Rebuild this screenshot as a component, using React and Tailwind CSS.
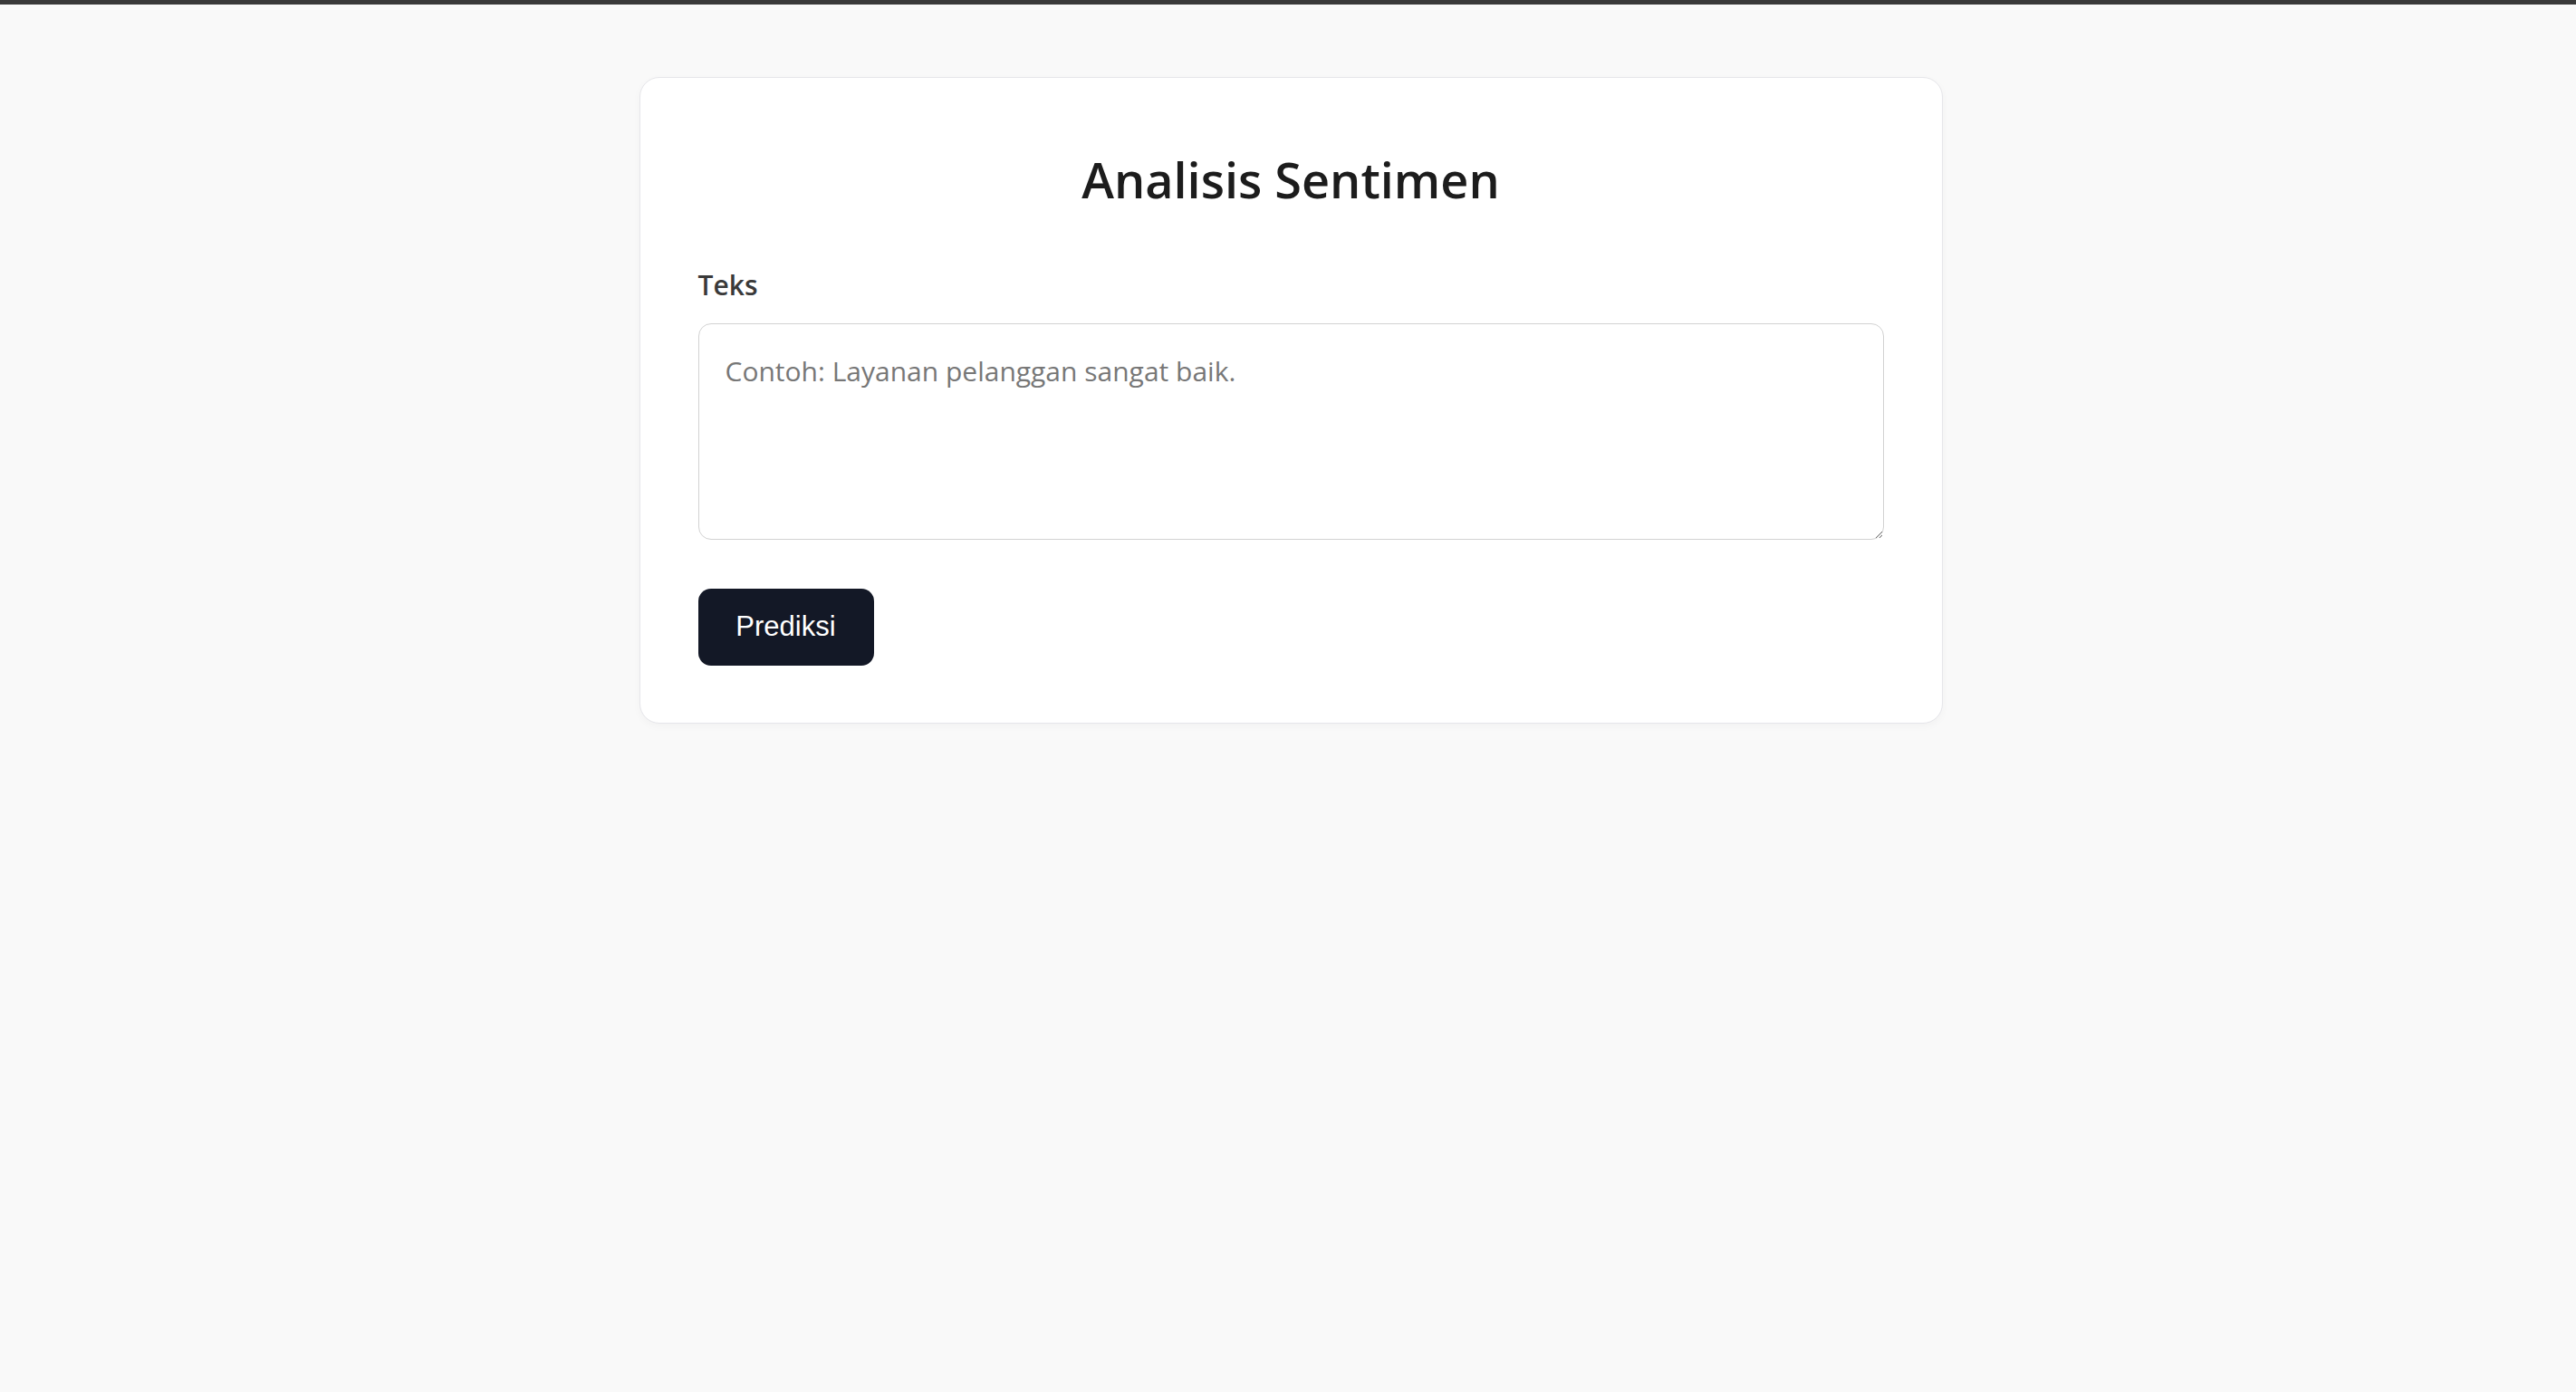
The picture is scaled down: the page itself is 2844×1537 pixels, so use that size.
import React from 'react'

export default function App() {
  return (
    <div className="min-h-screen bg-[#f9f9f9] font-['Open_Sans',sans-serif]">
      <div className="h-[5px] bg-[#3a3a3a]" />
      <div className="flex justify-center pt-[80px] pl-[6px]">
        <div className="w-[1439px] bg-white border border-[#e6e6ea] rounded-[22px] shadow-[0_3px_10px_rgba(0,0,0,0.03)] px-[64px] pt-[80px] pb-[63px]">
          <h1 className="text-center text-[54px] leading-[1.2] text-[#1c1c1c] font-semibold">
            Analisis Sentimen
          </h1>
          <label className="block mt-[66px] text-[30px] leading-[1.2] font-semibold text-[#3a3a3a]">
            Teks
          </label>
          <textarea
            className="block w-full mt-[24px] h-[239px] border border-[#d2d2d2] rounded-[14px] p-[29px] text-[30px] leading-[1.5] text-[#222] placeholder:text-[#777] outline-none"
            placeholder="Contoh: Layanan pelanggan sangat baik."
          />
          <button className="mt-[54px] w-[194px] h-[85px] rounded-[14px] bg-[#131826] text-white text-[31px] font-['Liberation_Sans',Arial,sans-serif]">
            Prediksi
          </button>
        </div>
      </div>
    </div>
  )
}
